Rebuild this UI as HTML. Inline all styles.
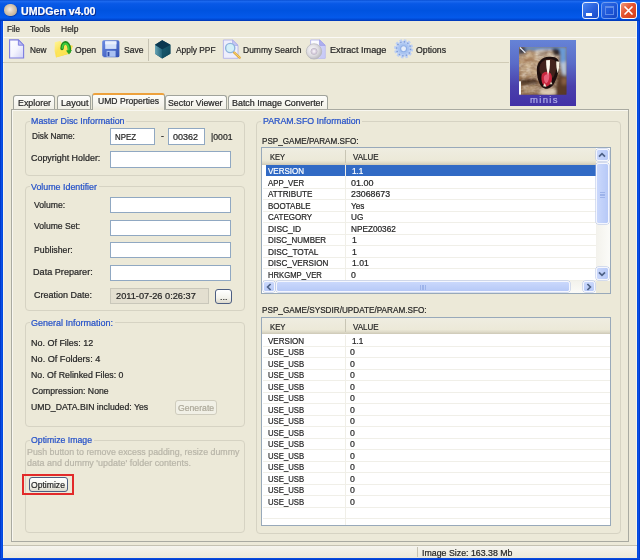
<!DOCTYPE html><html><head><meta charset="utf-8"><title>UMDGen v4.00</title><style>
html,body{margin:0;padding:0;background:#ECE9D8;}
#w{position:relative;width:640px;height:560px;overflow:hidden;font-family:"Liberation Sans",sans-serif;font-size:9px;color:#262626;-webkit-text-stroke:0.22px;}
#w div{position:absolute;}
#w span{position:absolute;white-space:nowrap;line-height:12px;height:12px;transform-origin:0 50%;}
</style></head><body><div id="w">
<div style="left:0px;top:0px;width:640px;height:560px;background:#ECE9D8;"></div>
<div style="left:0px;top:0px;width:640px;height:21px;background:linear-gradient(#0a50d4 0%,#1b68ee 7%,#0858e6 18%,#0053e0 50%,#0459ea 84%,#0046d0 94%,#0034b2 100%);"></div>
<div style="left:0px;top:21px;width:3px;height:539px;background:linear-gradient(90deg,#0030c0,#0a50e6 50%,#0048dc);"></div>
<div style="left:637px;top:21px;width:3px;height:539px;background:linear-gradient(90deg,#0048dc,#0a50e6 50%,#0030c0);"></div>
<div style="left:0px;top:557.6px;width:640px;height:2.4px;background:linear-gradient(#0a50e6,#0038c8);"></div>
<div style="left:3px;top:21px;width:1px;height:536px;background:#f6f4ec;"></div>
<div style="left:636px;top:21px;width:1px;height:536px;background:#f6f4ec;"></div>
<div style="left:4px;top:3.5px;width:12.5px;height:12.5px;border-radius:45%;background:radial-gradient(circle at 45% 45%,#f4ece4 0%,#d8c8b4 40%,#c2b29a 70%,#a89c8a 100%);box-shadow:0.5px 0.5px 1px #0a2a8a;"></div>
<div style="left:582px;top:2px;width:17px;height:17px;border-radius:3px;border:1px solid #e8eefc;box-sizing:border-box;background:linear-gradient(135deg,#4a86f2,#2860dc 55%,#1a4cc8);"><div style="left:3px;top:9.5px;width:6px;height:3px;background:#fff"></div></div>
<div style="left:601px;top:2px;width:17px;height:17px;border-radius:3px;border:1px solid #6f9cf0;box-sizing:border-box;background:linear-gradient(135deg,#2f6ee8,#1c54d6 60%,#1546c2);"><div style="left:3px;top:3px;width:9px;height:9px;box-sizing:border-box;border:1px solid #5f8ce8;border-top:2px solid #5f8ce8"></div></div>
<div style="left:620px;top:2px;width:17px;height:17px;border-radius:3px;border:1px solid #fff;box-sizing:border-box;background:linear-gradient(135deg,#f29a7c,#e5532f 45%,#d23e1a);"><svg width="15" height="15" viewBox="0 0 15 15" style="position:absolute;left:0;top:0"><path d="M4 4L11 11M11 4L4 11" stroke="#fff" stroke-width="1.7" stroke-linecap="round"/></svg></div>
<div style="left:3px;top:37px;width:634px;height:1px;background:#fbfaf6;"></div>
<div style="left:3px;top:62px;width:506px;height:1px;background:#d0cbb6;"></div>
<div style="left:148px;top:39px;width:1px;height:22px;background:#c5c2b2;"></div>
<svg style="position:absolute;left:0;top:36px" width="460" height="28" viewBox="0 36 460 28">
<defs>
<linearGradient id="pg" x1="0" y1="0" x2="1" y2="1"><stop offset="0" stop-color="#fff"/><stop offset="0.5" stop-color="#f4f4fe"/><stop offset="1" stop-color="#cfd0f6"/></linearGradient>
<linearGradient id="fo" x1="0" y1="0" x2="1" y2="1"><stop offset="0" stop-color="#fff79a"/><stop offset="0.6" stop-color="#fbd83c"/><stop offset="1" stop-color="#eeb81c"/></linearGradient>
<linearGradient id="fl" x1="0" y1="0" x2="1" y2="1"><stop offset="0" stop-color="#6a8ae2"/><stop offset="1" stop-color="#3250b2"/></linearGradient>
<linearGradient id="c1" x1="0" y1="0" x2="1" y2="0"><stop offset="0" stop-color="#6aa6b6"/><stop offset="1" stop-color="#1f6076"/></linearGradient>
<linearGradient id="c2" x1="0" y1="0" x2="1" y2="1"><stop offset="0" stop-color="#1a5e72"/><stop offset="1" stop-color="#0f4458"/></linearGradient>
<radialGradient id="cd" cx="0.4" cy="0.4" r="0.7"><stop offset="0" stop-color="#fbfafc"/><stop offset="0.55" stop-color="#dddbe0"/><stop offset="1" stop-color="#b0b0b6"/></radialGradient>
<radialGradient id="ge" cx="0.5" cy="0.5" r="0.5"><stop offset="0" stop-color="#e8f0fc"/><stop offset="0.3" stop-color="#c4d8f8"/><stop offset="0.75" stop-color="#9cbcf0"/><stop offset="1" stop-color="#b8cef4"/></radialGradient>
</defs>
<!-- new -->
<path d="M9.6 39.9H18.4L23.6 45.2V58H9.6Z" fill="url(#pg)" stroke="#7c7ce0" stroke-width="1.1"/>
<path d="M18.4 39.9V45.2H23.6Z" fill="#b9baf2" stroke="#7c7ce0" stroke-width="0.9"/>
<!-- open -->
<path d="M54.8 42.2L60 41L62.2 43.4L72.8 45.8L70 53.4L56 57.4L54.6 51Z" fill="url(#fo)"/>
<path d="M56 57.2L58.5 47.5L72.6 46L70 53.4Z" fill="#fde65a" opacity="0.8"/>
<path d="M62 48.6C62 44 64.5 41.6 66.8 43.2C69 44.8 69.6 48 69.3 51.4" fill="none" stroke="#1f8a1f" stroke-width="3.4" stroke-linecap="round"/>
<path d="M62.4 48C62.6 44.6 64.6 42.6 66.6 44C68.4 45.4 69 48 68.8 51" fill="none" stroke="#3fd03f" stroke-width="1.7" stroke-linecap="round"/>
<path d="M66 50.5L72 50L69 54.5Z" fill="#28a428"/>
<!-- save -->
<rect x="102.2" y="40.3" width="17.2" height="17" rx="1.6" fill="url(#fl)"/>
<path d="M102.2 55.5L104 57.3H102.8Q102.2 57.3 102.2 56.7Z" fill="#ece9d8"/>
<rect x="105.2" y="41.3" width="11.2" height="7.6" fill="#d3e0fa"/>
<rect x="105.2" y="41.3" width="11.2" height="3" fill="#eaf0fd"/>
<rect x="106.6" y="50.8" width="9" height="6" fill="#a9c0f2"/>
<rect x="107.6" y="52" width="1.8" height="4.2" fill="#2f4aa8"/>
<!-- cube -->
<path d="M162.2 40.2L170.4 44.7V53.8L162.2 58.4L155 53.8V44.7Z" fill="#0e4257"/>
<path d="M155 44.7L162.2 49.2V58.4L155 53.8Z" fill="url(#c1)"/>
<path d="M170.4 44.7L162.2 49.2V58.4L170.4 53.8Z" fill="url(#c2)"/>
<path d="M162.2 40.2L170.4 44.7L162.2 49.2L155 44.7Z" fill="#0b3850"/>
<!-- dummy search -->
<path d="M223.4 40H232.6L238 45.4V58.3H223.4Z" fill="#eeeefc" stroke="#b2b2ea" stroke-width="0.9"/>
<path d="M232.6 40V45.4H238Z" fill="#c6c7f4" stroke="#a9a9e6" stroke-width="0.8"/>
<path d="M234 52.4L239.6 57.6" stroke="#e2a836" stroke-width="2.4" stroke-linecap="round"/>
<path d="M234.3 52.6L239.4 57.3" stroke="#f6d880" stroke-width="0.9" stroke-linecap="round"/>
<circle cx="230.2" cy="48" r="4.6" fill="#d3f0f8" stroke="#8fb4dc" stroke-width="1.4"/>
<!-- extract image -->
<path d="M310.6 40H319.6L325.2 45.4V58.3H310.6Z" fill="url(#pg)" stroke="#b4b5ee" stroke-width="0.9"/>
<path d="M319.6 40V45.4H325.2Z" fill="#aeb0f0" stroke="#9a9ce4" stroke-width="0.8"/>
<path d="M320 46H325V58H320Z" fill="#c4c7f6" opacity="0.8"/>
<circle cx="314" cy="51.4" r="7.7" fill="url(#cd)" stroke="#b4b4b8" stroke-width="0.7"/>
<circle cx="314" cy="51.4" r="3.1" fill="#dcd2e2" stroke="#bcb6c4" stroke-width="0.8"/>
<circle cx="314" cy="51.4" r="1.3" fill="#f2eef4"/>
<!-- options gear -->
<circle cx="403.6" cy="48.8" r="8.6" fill="none" stroke="#bdd0f4" stroke-width="2" stroke-dasharray="2.6 1.9"/>
<circle cx="403.6" cy="48.8" r="8" fill="#bcd0f5"/>
<circle cx="403.6" cy="48.8" r="7" fill="none" stroke="#6c8ccc" stroke-width="1.5" stroke-dasharray="1.4 2.26" opacity="0.75"/>
<circle cx="403.6" cy="48.8" r="5.6" fill="#a9c4f1"/>
<circle cx="403.6" cy="48.8" r="3" fill="#e6edf9" stroke="#8eaee6" stroke-width="1.1"/>
</svg>
<div style="left:510px;top:40px;width:66px;height:66px;background:linear-gradient(#6683d6 0%,#5a6cc8 35%,#4a40ac 70%,#4331a6 100%);"></div>
<svg style="position:absolute;left:519.2px;top:46.8px" width="47.6" height="47.8" viewBox="25 30 500 502" preserveAspectRatio="none">
<defs><filter id="bl" x="-20%" y="-20%" width="140%" height="140%"><feGaussianBlur stdDeviation="15"/></filter>
<filter id="bl2" x="-20%" y="-20%" width="140%" height="140%"><feGaussianBlur stdDeviation="7"/></filter>
<filter id="nz" x="0" y="0" width="100%" height="100%"><feTurbulence type="fractalNoise" baseFrequency="0.012 0.03" numOctaves="3" seed="7" result="t"/><feColorMatrix in="t" type="matrix" values="0 0 0 0 0.35  0 0 0 0 0.22  0 0 0 0 0.14  1.8 1.2 0 0 -1.15"/></filter>
<filter id="nz2" x="0" y="0" width="100%" height="100%"><feTurbulence type="fractalNoise" baseFrequency="0.02 0.035" numOctaves="2" seed="3" result="t"/><feColorMatrix in="t" type="matrix" values="0 0 0 0 0.96  0 0 0 0 0.9  0 0 0 0 0.8  0 1.6 1.4 0 -1.25"/></filter>
<clipPath id="cp"><rect x="25" y="30" width="500" height="502"/></clipPath>
<mask id="furmask"><path d="M25 120L120 70L200 80L380 70L440 120L445 200L455 300L430 340L400 532H46V390H25Z" fill="#fff" filter="url(#bl)"/></mask>
<linearGradient id="fur" x1="0" y1="0" x2="1" y2="1"><stop offset="0" stop-color="#b08c66"/><stop offset="0.5" stop-color="#8e6846"/><stop offset="1" stop-color="#4e3426"/></linearGradient></defs>
<g clip-path="url(#cp)">
<rect x="25" y="30" width="500" height="502" fill="url(#fur)"/>
<g filter="url(#bl)">
<path d="M25 30H525V70H440L380 60L200 70L120 60L25 120Z" fill="#5a8ed0"/>
<path d="M430 30H525V330L470 300L450 200L455 120Z" fill="#6a9ad6"/>
<path d="M455 200L525 180V340L480 320Z" fill="#b9c6d8"/>
<path d="M25 30H90L100 100L25 130Z" fill="#3a3a48"/>
<path d="M40 120C90 90 170 80 250 100L230 200L210 330L60 340C40 280 30 200 40 120Z" fill="#c6aa88"/>
<path d="M200 70L400 60L440 110L420 150L330 130L240 160L200 130Z" fill="#e2d6c2"/>
<path d="M230 90L330 70L335 90L240 115Z" fill="#7a5236"/>
<path d="M370 55L445 60L450 110L400 120Z" fill="#2e2220"/>
<path d="M30 380L210 370L215 420L30 425Z" fill="#4e3426"/>
<path d="M45 430L220 430L250 530L45 530Z" fill="#8e6a4a"/>
<path d="M80 450L200 440L210 470L90 490Z" fill="#c4a884"/>
<path d="M440 330L525 330V532H400L430 440Z" fill="#5a3a28"/>
<path d="M470 360L525 350V420L480 430Z" fill="#8a6244"/>
<path d="M250 470L400 460L410 532H250Z" fill="#dccab0"/>
</g>
<g mask="url(#furmask)"><rect x="25" y="30" width="500" height="502" filter="url(#nz)" opacity="0.9"/><rect x="25" y="30" width="500" height="502" filter="url(#nz2)" opacity="0.42"/></g>
<g filter="url(#bl)" opacity="0.85">
<path d="M40 385L205 372L212 410L40 420Z" fill="#4a3022"/>
<path d="M372 58L440 62L446 108L404 118Z" fill="#2a1e1c"/>
<path d="M232 92L330 72L334 92L242 116Z" fill="#6e4830"/>
<path d="M215 75L300 64L302 76L222 90Z" fill="#efe6d6"/>
<path d="M60 160L190 135L188 160L70 195Z" fill="#94643e"/>
<path d="M250 480L400 470L405 525H255Z" fill="#e2d2b8"/>
</g>
<g filter="url(#bl2)">
<path d="M212 270C212 195 262 135 340 133C420 128 452 160 448 230C444 300 420 360 400 400C380 448 340 472 302 468C254 462 212 380 212 270Z" fill="#1c100e"/>
<path d="M240 250C246 190 288 158 340 156C392 154 428 180 423 230C418 280 398 322 384 352L268 332C252 310 237 290 240 250Z" fill="#42201a"/>
<path d="M262 330C272 296 300 286 330 292C362 298 375 330 371 370C367 412 342 444 310 444C278 444 254 392 262 330Z" fill="#c8283e"/>
<path d="M288 340C298 318 320 312 342 320C347 350 337 392 316 412C294 406 282 370 288 340Z" fill="#e8607a"/>
<path d="M310 170L350 166C353 230 346 282 330 326C316 282 309 230 310 170Z" fill="#fdf9ee"/>
<path d="M416 180L448 184C450 230 444 272 432 306C420 270 415 228 416 180Z" fill="#f6f0e0"/>
<path d="M278 442L296 408L312 448Z" fill="#f2ead6"/>
<path d="M350 422L362 392L376 420Z" fill="#e8dcc4"/>
</g>
<rect x="25" y="390" width="21" height="142" fill="#fbfbfb" filter="url(#bl2)"/>
<path d="M35 35L92 92" stroke="#eef2fa" stroke-width="12" filter="url(#bl2)"/>
</g></svg>
<div style="left:11px;top:109px;width:618px;height:433px;box-sizing:border-box;border:1px solid #a9aaa1;background:#ECE9D8;box-shadow:inset 1px 1px 0 #f8f7f0;"></div>
<div style="left:13px;top:95px;width:42px;height:14px;box-sizing:border-box;border:1px solid #a0a39b;border-bottom:none;border-radius:3px 3px 0 0;background:linear-gradient(#fdfdfb,#f1f0e6);"></div>
<div style="left:56.5px;top:95px;width:34.0px;height:14px;box-sizing:border-box;border:1px solid #a0a39b;border-bottom:none;border-radius:3px 3px 0 0;background:linear-gradient(#fdfdfb,#f1f0e6);"></div>
<div style="left:165px;top:95px;width:62px;height:14px;box-sizing:border-box;border:1px solid #a0a39b;border-bottom:none;border-radius:3px 3px 0 0;background:linear-gradient(#fdfdfb,#f1f0e6);"></div>
<div style="left:228px;top:95px;width:100px;height:14px;box-sizing:border-box;border:1px solid #a0a39b;border-bottom:none;border-radius:3px 3px 0 0;background:linear-gradient(#fdfdfb,#f1f0e6);"></div>
<div style="left:91.5px;top:93px;width:73px;height:17px;box-sizing:border-box;border:1px solid #a0a39b;border-bottom:none;border-top:2px solid #eda13c;border-radius:3px 3px 0 0;background:linear-gradient(#fcfcf9,#f3f2ea 70%,#ECE9D8);"></div>
<div style="left:24.5px;top:120.5px;width:220.5px;height:55.5px;box-sizing:border-box;border:1px solid #d6d3c3;border-radius:4px;"></div>
<div style="left:29.5px;top:118.5px;width:96.5px;height:5px;background:#ECE9D8;"></div>
<div style="left:24.5px;top:186px;width:220.5px;height:124.5px;box-sizing:border-box;border:1px solid #d6d3c3;border-radius:4px;"></div>
<div style="left:29.5px;top:184px;width:69.0px;height:5px;background:#ECE9D8;"></div>
<div style="left:24.5px;top:322px;width:220.5px;height:105px;box-sizing:border-box;border:1px solid #d6d3c3;border-radius:4px;"></div>
<div style="left:29.5px;top:320px;width:85.0px;height:5px;background:#ECE9D8;"></div>
<div style="left:24.5px;top:439.5px;width:220.5px;height:93.5px;box-sizing:border-box;border:1px solid #d6d3c3;border-radius:4px;"></div>
<div style="left:29.5px;top:437.5px;width:64.1px;height:5px;background:#ECE9D8;"></div>
<div style="left:256px;top:120.5px;width:365px;height:413.5px;box-sizing:border-box;border:1px solid #d6d3c3;border-radius:4px;"></div>
<div style="left:261px;top:118.5px;width:100.5px;height:5px;background:#ECE9D8;"></div>
<div style="left:110px;top:128px;width:45px;height:16.5px;box-sizing:border-box;border:1px solid #90a8c2;background:#fff;"></div>
<div style="left:168px;top:128px;width:37px;height:16.5px;box-sizing:border-box;border:1px solid #90a8c2;background:#fff;"></div>
<div style="left:110px;top:151px;width:121px;height:16.5px;box-sizing:border-box;border:1px solid #90a8c2;background:#fff;"></div>
<div style="left:110px;top:196.5px;width:121px;height:16.0px;box-sizing:border-box;border:1px solid #90a8c2;background:#fff;"></div>
<div style="left:110px;top:219.5px;width:121px;height:16.0px;box-sizing:border-box;border:1px solid #90a8c2;background:#fff;"></div>
<div style="left:110px;top:242px;width:121px;height:16px;box-sizing:border-box;border:1px solid #90a8c2;background:#fff;"></div>
<div style="left:110px;top:265px;width:121px;height:16px;box-sizing:border-box;border:1px solid #90a8c2;background:#fff;"></div>
<div style="left:110px;top:288px;width:98.5px;height:15.5px;box-sizing:border-box;border:1px solid #c9c7ba;background:#e3dfd0;"></div>
<div style="left:215px;top:289px;width:16.5px;height:14.5px;box-sizing:border-box;border:1px solid #4c5e82;border-radius:3px;background:linear-gradient(#fff,#f4f3ec 60%,#dcd9cc);"></div>
<div style="left:175px;top:400px;width:42px;height:15px;box-sizing:border-box;border:1px solid #cfccbd;border-radius:3px;background:#f1f0e6;"></div>
<div style="left:22px;top:473.5px;width:52px;height:21px;box-sizing:border-box;border:2px solid #e22a2a;"></div>
<div style="left:28.5px;top:477px;width:39.5px;height:15px;box-sizing:border-box;border:1px solid #4c5e82;border-radius:3px;background:linear-gradient(#fff,#f4f3ec 60%,#dcd9cc);"></div>
<div style="left:261px;top:147px;width:349.5px;height:147px;box-sizing:border-box;border:1px solid #98a9ba;background:#fff;"></div>
<div style="left:262px;top:148px;width:333.5px;height:16.8px;background:linear-gradient(#efede1 0%,#ece9d8 72%,#e0dcca 86%,#cdc8b6 100%);"></div>
<div style="left:344.5px;top:150px;width:1px;height:13px;background:#c8c5b4;"></div>
<div style="left:266px;top:165px;width:329.5px;height:10.6px;background:#316ac5;"></div>
<div style="left:262.5px;top:188px;width:333px;height:1px;background:#f0efe8;"></div>
<div style="left:262.5px;top:199px;width:333px;height:1px;background:#f0efe8;"></div>
<div style="left:262.5px;top:211px;width:333px;height:1px;background:#f0efe8;"></div>
<div style="left:262.5px;top:222px;width:333px;height:1px;background:#f0efe8;"></div>
<div style="left:262.5px;top:234px;width:333px;height:1px;background:#f0efe8;"></div>
<div style="left:262.5px;top:245px;width:333px;height:1px;background:#f0efe8;"></div>
<div style="left:262.5px;top:257px;width:333px;height:1px;background:#f0efe8;"></div>
<div style="left:262.5px;top:268px;width:333px;height:1px;background:#f0efe8;"></div>
<div style="left:262.5px;top:280px;width:333px;height:1px;background:#f0efe8;"></div>
<div style="left:344.5px;top:165px;width:1px;height:116px;background:#f0efe8;"></div>
<div style="left:595.5px;top:148.5px;width:14px;height:132.5px;background:linear-gradient(90deg,#f3f2ec,#fbfbf8);"></div>
<div style="left:595.8px;top:148.8px;width:13.2px;height:12.4px;box-sizing:border-box;border:1px solid #f4f6fe;border-radius:2.5px;background:linear-gradient(90deg,#cad8fc,#b7c9f7);box-shadow:0 0 0 0.5px #b0c0e8;"></div>
<svg style="position:absolute;left:597.4px;top:150px" width="10" height="10" viewBox="-5 -5 10 10"><path d="M-3 1.6L0 -1.4L3 1.6" fill="none" stroke="#4d6185" stroke-width="1.7"/></svg>
<div style="left:595.8px;top:163.4px;width:13.2px;height:61px;box-sizing:border-box;border:1px solid #f4f6fe;border-radius:2.5px;background:linear-gradient(90deg,#cad8fc,#b7c9f7);box-shadow:0 0 0 0.5px #b0c0e8;"></div>
<div style="left:599.8px;top:192.0px;width:5px;height:0.8px;background:#9db3ea;"></div>
<div style="left:599.8px;top:193.6px;width:5px;height:0.8px;background:#9db3ea;"></div>
<div style="left:599.8px;top:195.2px;width:5px;height:0.8px;background:#9db3ea;"></div>
<div style="left:599.8px;top:196.8px;width:5px;height:0.8px;background:#9db3ea;"></div>
<div style="left:595.8px;top:267.2px;width:13.2px;height:12.6px;box-sizing:border-box;border:1px solid #f4f6fe;border-radius:2.5px;background:linear-gradient(90deg,#cad8fc,#b7c9f7);box-shadow:0 0 0 0.5px #b0c0e8;"></div>
<svg style="position:absolute;left:597.4px;top:268.8px" width="10" height="10" viewBox="-5 -5 10 10"><path d="M-3 -1.6L0 1.4L3 -1.6" fill="none" stroke="#4d6185" stroke-width="1.7"/></svg>
<div style="left:262.5px;top:281px;width:333px;height:12px;background:linear-gradient(#f3f2ec,#fbfbf8);"></div>
<div style="left:262.8px;top:281.3px;width:12px;height:11.2px;box-sizing:border-box;border:1px solid #f4f6fe;border-radius:2.5px;background:linear-gradient(#cad8fc,#b7c9f7);box-shadow:0 0 0 0.5px #b0c0e8;"></div>
<svg style="position:absolute;left:263.6px;top:282px" width="10" height="10" viewBox="-5 -5 10 10"><path d="M1.6 -3L-1.4 0L1.6 3" fill="none" stroke="#4d6185" stroke-width="1.7"/></svg>
<div style="left:276px;top:281.3px;width:294px;height:11.2px;box-sizing:border-box;border:1px solid #f4f6fe;border-radius:2.5px;background:linear-gradient(#cad8fc,#b7c9f7);box-shadow:0 0 0 0.5px #b0c0e8;"></div>
<div style="left:420.0px;top:284.5px;width:0.8px;height:5px;background:#9db3ea;"></div>
<div style="left:421.6px;top:284.5px;width:0.8px;height:5px;background:#9db3ea;"></div>
<div style="left:423.2px;top:284.5px;width:0.8px;height:5px;background:#9db3ea;"></div>
<div style="left:424.8px;top:284.5px;width:0.8px;height:5px;background:#9db3ea;"></div>
<div style="left:583px;top:281.3px;width:12px;height:11.2px;box-sizing:border-box;border:1px solid #f4f6fe;border-radius:2.5px;background:linear-gradient(#cad8fc,#b7c9f7);box-shadow:0 0 0 0.5px #b0c0e8;"></div>
<svg style="position:absolute;left:584.2px;top:282px" width="10" height="10" viewBox="-5 -5 10 10"><path d="M-1.6 -3L1.4 0L-1.6 3" fill="none" stroke="#4d6185" stroke-width="1.7"/></svg>
<div style="left:595.5px;top:281px;width:14px;height:12px;background:#ECE9D8;"></div>
<div style="left:261px;top:316.5px;width:349.5px;height:209.0px;box-sizing:border-box;border:1px solid #98a9ba;background:#fff;"></div>
<div style="left:262px;top:317.5px;width:347.5px;height:16.8px;background:linear-gradient(#efede1 0%,#ece9d8 72%,#e0dcca 86%,#cdc8b6 100%);"></div>
<div style="left:344.5px;top:319px;width:1px;height:13px;background:#c8c5b4;"></div>
<div style="left:262.5px;top:346px;width:347px;height:1px;background:#f0efe8;"></div>
<div style="left:262.5px;top:357px;width:347px;height:1px;background:#f0efe8;"></div>
<div style="left:262.5px;top:369px;width:347px;height:1px;background:#f0efe8;"></div>
<div style="left:262.5px;top:380px;width:347px;height:1px;background:#f0efe8;"></div>
<div style="left:262.5px;top:392px;width:347px;height:1px;background:#f0efe8;"></div>
<div style="left:262.5px;top:403px;width:347px;height:1px;background:#f0efe8;"></div>
<div style="left:262.5px;top:415px;width:347px;height:1px;background:#f0efe8;"></div>
<div style="left:262.5px;top:426px;width:347px;height:1px;background:#f0efe8;"></div>
<div style="left:262.5px;top:438px;width:347px;height:1px;background:#f0efe8;"></div>
<div style="left:262.5px;top:449px;width:347px;height:1px;background:#f0efe8;"></div>
<div style="left:262.5px;top:461px;width:347px;height:1px;background:#f0efe8;"></div>
<div style="left:262.5px;top:472px;width:347px;height:1px;background:#f0efe8;"></div>
<div style="left:262.5px;top:484px;width:347px;height:1px;background:#f0efe8;"></div>
<div style="left:262.5px;top:495px;width:347px;height:1px;background:#f0efe8;"></div>
<div style="left:262.5px;top:507px;width:347px;height:1px;background:#f0efe8;"></div>
<div style="left:262.5px;top:518px;width:347px;height:1px;background:#f0efe8;"></div>
<div style="left:344.5px;top:334.5px;width:1px;height:190px;background:#f0efe8;"></div>
<div style="left:3px;top:545px;width:634px;height:1px;background:#c5c2b2;"></div>
<div style="left:3px;top:546px;width:634px;height:12px;background:linear-gradient(#f5f4ee,#ece9d9);"></div>
<div style="left:417px;top:547px;width:1px;height:10px;background:#c5c2b2;"></div>
<span style="left:21px;top:4.5px;color:#fff;font-size:11px;font-weight:bold;transform:scaleX(0.967);text-shadow:1px 1px 0 #0a2a8a;">UMDGen v4.00</span>
<span style="left:7px;top:22.5px;transform:scaleX(0.902);">File</span>
<span style="left:30.4px;top:22.5px;transform:scaleX(0.956);">Tools</span>
<span style="left:60.6px;top:22.5px;transform:scaleX(0.945);">Help</span>
<span style="left:29.6px;top:44px;transform:scaleX(0.916);">New</span>
<span style="left:75px;top:44px;transform:scaleX(0.958);">Open</span>
<span style="left:124px;top:44px;transform:scaleX(0.95);">Save</span>
<span style="left:176px;top:44px;transform:scaleX(0.929);">Apply PPF</span>
<span style="left:243px;top:44px;transform:scaleX(0.943);">Dummy Search</span>
<span style="left:330px;top:44px;transform:scaleX(1.017);">Extract Image</span>
<span style="left:416px;top:44px;transform:scaleX(0.97);">Options</span>
<span style="left:529.6px;top:94.2px;color:#aeabe8;font-size:9.5px;transform:scaleX(1.001);letter-spacing:1.3px;">minis</span>
<span style="left:17.5px;top:97px;transform:scaleX(0.985);">Explorer</span>
<span style="left:60.5px;top:97px;transform:scaleX(1.017);">Layout</span>
<span style="left:168px;top:97px;transform:scaleX(0.976);">Sector Viewer</span>
<span style="left:232px;top:97px;transform:scaleX(0.989);">Batch Image Converter</span>
<span style="left:97.5px;top:95px;transform:scaleX(0.953);">UMD Properties</span>
<span style="left:31.0px;top:115.0px;color:#2450c8;transform:scaleX(0.984);">Master Disc Information</span>
<span style="left:31.0px;top:180.5px;color:#2450c8;transform:scaleX(0.984);">Volume Identifier</span>
<span style="left:31.0px;top:316.5px;color:#2450c8;transform:scaleX(0.999);">General Information:</span>
<span style="left:31.0px;top:434.0px;color:#2450c8;transform:scaleX(0.969);">Optimize Image</span>
<span style="left:262.5px;top:115.0px;color:#2450c8;transform:scaleX(0.976);">PARAM.SFO Information</span>
<span style="left:31.5px;top:130px;transform:scaleX(0.922);">Disk Name:</span>
<span style="left:114.5px;top:130.5px;transform:scaleX(0.874);">NPEZ</span>
<span style="left:161px;top:130px;transform:scaleX(0.97);">-</span>
<span style="left:172.5px;top:130.5px;transform:scaleX(0.999);">00362</span>
<span style="left:211px;top:130.5px;transform:scaleX(0.962);">|0001</span>
<span style="left:30.9px;top:151.7px;transform:scaleX(0.99);">Copyright Holder:</span>
<span style="left:33.75px;top:199px;transform:scaleX(0.961);">Volume:</span>
<span style="left:33.75px;top:220.3px;transform:scaleX(0.953);">Volume Set:</span>
<span style="left:34.25px;top:244px;transform:scaleX(0.968);">Publisher:</span>
<span style="left:33.25px;top:266.2px;transform:scaleX(1.012);">Data Preparer:</span>
<span style="left:33.75px;top:288.6px;transform:scaleX(0.999);">Creation Date:</span>
<span style="left:116.25px;top:290px;transform:scaleX(1.024);">2011-07-26 0:26:37</span>
<span style="left:219.5px;top:291px;transform:scaleX(0.998);">...</span>
<span style="left:31px;top:337px;transform:scaleX(0.996);">No. Of Files: 12</span>
<span style="left:31px;top:352.7px;transform:scaleX(1.011);">No. Of Folders: 4</span>
<span style="left:31px;top:369px;transform:scaleX(0.973);">No. Of Relinked Files: 0</span>
<span style="left:31.8px;top:384.7px;transform:scaleX(0.963);">Compression: None</span>
<span style="left:31px;top:401px;transform:scaleX(0.966);">UMD_DATA.BIN included: Yes</span>
<span style="left:177.6px;top:401.5px;color:#aca899;transform:scaleX(0.962);">Generate</span>
<span style="left:27px;top:446px;color:#b8b5a8;transform:scaleX(0.981);">Push button to remove excess padding, resize dummy</span>
<span style="left:26.5px;top:456.5px;color:#b8b5a8;transform:scaleX(0.997);">data and dummy 'update' folder contents.</span>
<span style="left:31px;top:479px;transform:scaleX(0.955);">Optimize</span>
<span style="left:262px;top:135px;transform:scaleX(0.903);">PSP_GAME/PARAM.SFO:</span>
<span style="left:270px;top:151px;transform:scaleX(0.833);">KEY</span>
<span style="left:353px;top:151px;transform:scaleX(0.884);">VALUE</span>
<span style="left:268px;top:165.0px;color:#fff;transform:scaleX(0.891);">VERSION</span>
<span style="left:351.6px;top:165.0px;color:#fff;transform:scaleX(0.911);">1.1</span>
<span style="left:268px;top:176.5px;transform:scaleX(0.869);">APP_VER</span>
<span style="left:350.7px;top:176.5px;transform:scaleX(0.999);">01.00</span>
<span style="left:268px;top:188.0px;transform:scaleX(0.902);">ATTRIBUTE</span>
<span style="left:350.7px;top:188.0px;transform:scaleX(0.976);">23068673</span>
<span style="left:268px;top:199.5px;transform:scaleX(0.888);">BOOTABLE</span>
<span style="left:350.7px;top:199.5px;transform:scaleX(0.912);">Yes</span>
<span style="left:268px;top:211.0px;transform:scaleX(0.888);">CATEGORY</span>
<span style="left:350.7px;top:211.0px;transform:scaleX(0.91);">UG</span>
<span style="left:268px;top:222.5px;transform:scaleX(0.935);">DISC_ID</span>
<span style="left:350.7px;top:222.5px;transform:scaleX(0.914);">NPEZ00362</span>
<span style="left:268px;top:234.0px;transform:scaleX(0.887);">DISC_NUMBER</span>
<span style="left:351.6px;top:234.0px;transform:scaleX(0.97);">1</span>
<span style="left:268px;top:245.5px;transform:scaleX(0.922);">DISC_TOTAL</span>
<span style="left:351.6px;top:245.5px;transform:scaleX(0.97);">1</span>
<span style="left:268px;top:257.0px;transform:scaleX(0.901);">DISC_VERSION</span>
<span style="left:351.6px;top:257.0px;transform:scaleX(0.958);">1.01</span>
<span style="left:268px;top:268.5px;transform:scaleX(0.854);">HRKGMP_VER</span>
<span style="left:350.7px;top:268.5px;transform:scaleX(0.97);">0</span>
<span style="left:262px;top:303.8px;transform:scaleX(0.908);">PSP_GAME/SYSDIR/UPDATE/PARAM.SFO:</span>
<span style="left:269.6px;top:320.7px;transform:scaleX(0.855);">KEY</span>
<span style="left:353px;top:320.7px;transform:scaleX(0.891);">VALUE</span>
<span style="left:267.8px;top:334.8px;transform:scaleX(0.893);">VERSION</span>
<span style="left:351.6px;top:334.8px;transform:scaleX(0.911);">1.1</span>
<span style="left:267.8px;top:346.29px;transform:scaleX(0.861);">USE_USB</span>
<span style="left:350.3px;top:346.29px;transform:scaleX(0.97);">0</span>
<span style="left:267.8px;top:357.78px;transform:scaleX(0.861);">USE_USB</span>
<span style="left:350.3px;top:357.78px;transform:scaleX(0.97);">0</span>
<span style="left:267.8px;top:369.27px;transform:scaleX(0.861);">USE_USB</span>
<span style="left:350.3px;top:369.27px;transform:scaleX(0.97);">0</span>
<span style="left:267.8px;top:380.76px;transform:scaleX(0.861);">USE_USB</span>
<span style="left:350.3px;top:380.76px;transform:scaleX(0.97);">0</span>
<span style="left:267.8px;top:392.25px;transform:scaleX(0.861);">USE_USB</span>
<span style="left:350.3px;top:392.25px;transform:scaleX(0.97);">0</span>
<span style="left:267.8px;top:403.74px;transform:scaleX(0.861);">USE_USB</span>
<span style="left:350.3px;top:403.74px;transform:scaleX(0.97);">0</span>
<span style="left:267.8px;top:415.23px;transform:scaleX(0.861);">USE_USB</span>
<span style="left:350.3px;top:415.23px;transform:scaleX(0.97);">0</span>
<span style="left:267.8px;top:426.72px;transform:scaleX(0.861);">USE_USB</span>
<span style="left:350.3px;top:426.72px;transform:scaleX(0.97);">0</span>
<span style="left:267.8px;top:438.21px;transform:scaleX(0.861);">USE_USB</span>
<span style="left:350.3px;top:438.21px;transform:scaleX(0.97);">0</span>
<span style="left:267.8px;top:449.7px;transform:scaleX(0.861);">USE_USB</span>
<span style="left:350.3px;top:449.7px;transform:scaleX(0.97);">0</span>
<span style="left:267.8px;top:461.19px;transform:scaleX(0.861);">USE_USB</span>
<span style="left:350.3px;top:461.19px;transform:scaleX(0.97);">0</span>
<span style="left:267.8px;top:472.68px;transform:scaleX(0.861);">USE_USB</span>
<span style="left:350.3px;top:472.68px;transform:scaleX(0.97);">0</span>
<span style="left:267.8px;top:484.17px;transform:scaleX(0.861);">USE_USB</span>
<span style="left:350.3px;top:484.17px;transform:scaleX(0.97);">0</span>
<span style="left:267.8px;top:495.66px;transform:scaleX(0.861);">USE_USB</span>
<span style="left:350.3px;top:495.66px;transform:scaleX(0.97);">0</span>
<span style="left:422px;top:546.5px;transform:scaleX(0.978);">Image Size: 163.38 Mb</span>
</div></body></html>
